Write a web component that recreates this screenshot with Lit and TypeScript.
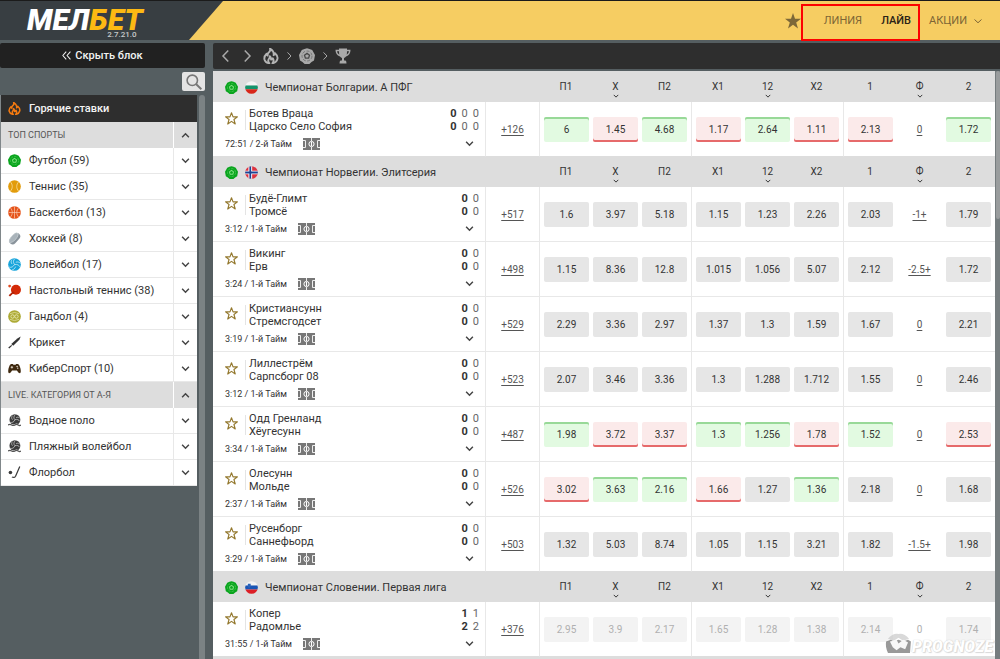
import { LitElement, html, css, svg, nothing } from "lit";
import { customElement, property } from "lit/decorators.js";
import { classMap } from "lit/directives/class-map.js";

type Odd = string;

interface Match {
  home: string;
  away: string;
  score: [string[], string[]];
  time: string;
  more: string;
  odds: Odd[];
  off?: boolean;
}

interface League {
  flag: string;
  title: string;
  matches: Match[];
}

const z2: [string[], string[]] = [["0", "0"], ["0", "0"]];

/* A trailing ^ marks a rising price, a trailing _ a falling one. */
const LEAGUES: League[] = [
  {
    flag: "bg",
    title: "Чемпионат Болгарии. А ПФГ",
    matches: [
      { home: "Ботев Враца", away: "Царско Село София", score: [["0", "0", "0"], ["0", "0", "0"]], time: "72:51 / 2-й Тайм", more: "+126",
        odds: ["6^", "1.45_", "4.68^", "1.17_", "2.64^", "1.11_", "2.13_", "0", "1.72^"] },
    ],
  },
  {
    flag: "no",
    title: "Чемпионат Норвегии. Элитсерия",
    matches: [
      { home: "Будё-Глимт", away: "Тромсё", score: z2, time: "3:12 / 1-й Тайм", more: "+517",
        odds: ["1.6", "3.97", "5.18", "1.15", "1.23", "2.26", "2.03", "-1+", "1.79"] },
      { home: "Викинг", away: "Ерв", score: z2, time: "3:24 / 1-й Тайм", more: "+498",
        odds: ["1.15", "8.36", "12.8", "1.015", "1.056", "5.07", "2.12", "-2.5+", "1.72"] },
      { home: "Кристиансунн", away: "Стремсгодсет", score: z2, time: "3:19 / 1-й Тайм", more: "+529",
        odds: ["2.29", "3.36", "2.97", "1.37", "1.3", "1.59", "1.67", "0", "2.21"] },
      { home: "Лиллестрём", away: "Сарпсборг 08", score: z2, time: "3:12 / 1-й Тайм", more: "+523",
        odds: ["2.07", "3.46", "3.36", "1.3", "1.288", "1.712", "1.55", "0", "2.46"] },
      { home: "Одд Гренланд", away: "Хёугесунн", score: z2, time: "3:34 / 1-й Тайм", more: "+487",
        odds: ["1.98^", "3.72_", "3.37_", "1.3^", "1.256^", "1.78_", "1.52^", "0", "2.53_"] },
      { home: "Олесунн", away: "Мольде", score: z2, time: "2:37 / 1-й Тайм", more: "+526",
        odds: ["3.02_", "3.63^", "2.16^", "1.66_", "1.27", "1.36^", "2.18", "0", "1.68"] },
      { home: "Русенборг", away: "Саннефьорд", score: z2, time: "3:29 / 1-й Тайм", more: "+503",
        odds: ["1.32", "5.03", "8.74", "1.05", "1.15", "3.21", "1.82", "-1.5+", "1.98"] },
    ],
  },
  {
    flag: "si",
    title: "Чемпионат Словении. Первая лига",
    matches: [
      { home: "Копер", away: "Радомлье", score: [["1", "1"], ["2", "2"]], time: "31:55 / 1-й Тайм", more: "+376", off: true,
        odds: ["2.95", "3.9", "2.17", "1.65", "1.28", "1.38", "2.14", "0", "1.74"] },
    ],
  },
];

const MARKETS = ["П1", "X", "П2", "X1", "12", "X2", "1", "Ф", "2"];

const SPORTS = [
  ["football", "Футбол (59)"],
  ["tennis", "Теннис (35)"],
  ["basket", "Баскетбол (13)"],
  ["hockey", "Хоккей (8)"],
  ["volley", "Волейбол (17)"],
  ["pingpong", "Настольный теннис (38)"],
  ["handball", "Гандбол (4)"],
  ["cricket", "Крикет"],
  ["esport", "КиберСпорт (10)"],
];

const LIVE = [
  ["beach", "Водное поло"],
  ["beach", "Пляжный волейбол"],
  ["floorball", "Флорбол"],
];

const ballPattern = (line: string) => svg`
  <path d="M8 5.4 10.500 7.200 9.600 10.200H6.400L5.500 7.200Z" fill="none" stroke=${line} stroke-width="1.300"/>
  <circle cx="8" cy="8" r="5" fill="none" stroke=${line} stroke-width=".5" stroke-dasharray="3 1.500"/>`;

const ICONS: Record<string, unknown> = {
  football: svg`<path d="M8 .2 10.500 1 13.200 2 14.600 4.600 16 7 15.500 9.800 15 12.600 12.500 14 10.400 16H5.600L3.500 14 1 12.600.5 9.800 0 7 1.400 4.600 2.800 2 5.500 1Z" fill="#0aa51e"/>${ballPattern("#7fe07f")}`,
  tennis: svg`<circle cx="8" cy="8" r="7.8" fill="#e29c0b"/><path d="M3 2.4C6 5.4 6 10.6 3 13.6M13 2.4C10 5.4 10 10.6 13 13.6" stroke="#f8dc9c" fill="none"/>`,
  basket: svg`<circle cx="8" cy="8" r="7.8" fill="#e5531a"/><path d="M8 .6V15.4M.6 8H15.4M3 2.4C6 5.4 6 10.6 3 13.6M13 2.4C10 5.4 10 10.6 13 13.6" stroke="#fbd3bd" stroke-width=".8" fill="none"/>`,
  hockey: svg`<g transform="rotate(-48 8 8)"><rect x="0" y="4" width="16" height="8.6" rx="4.3" fill="#89939b"/><ellipse cx="8" cy="6.6" rx="7.4" ry="3.1" fill="#a9b3ba" stroke="#dfe4e7" stroke-width=".6"/></g>`,
  volley: svg`<circle cx="8" cy="8" r="7.8" fill="#17a4db"/><path d="M8 8C6 5 6.400 2.600 8.600.8M8 8C11.500 7.500 13.800 8.800 14.800 11M8 8C6.500 11 4 12 1.500 11.200M5 7.500C3.500 5.500 3.600 3.500 5 2M9.500 5.200C12 4.500 14 5 15.200 6.600M9.400 10.600C8.500 13 6.800 14.400 5 14.700" stroke="#d5f0fa" stroke-width=".9" fill="none"/>`,
  pingpong: svg`<circle cx="9.800" cy="7" r="6.200" fill="#d42a07"/><path d="M6 8.500 8.500 11.500 6 12 2.500 15.400.8 13.700 4.500 10.500Z" fill="#b32206"/><circle cx="2" cy="2.600" r="1.700" fill="#e04a20"/>`,
  handball: svg`<circle cx="8" cy="8" r="7.800" fill="#adaa35"/><circle cx="5.600" cy="8" r="2.100" fill="none" stroke="#ecebb9"/><circle cx="10.400" cy="8" r="2.100" fill="none" stroke="#ecebb9"/><path d="M2.500 4.500Q8 1.500 13.500 4.500M2.500 11.500Q8 14.500 13.500 11.500" fill="none" stroke="#ecebb9" stroke-width=".8"/>`,
  cricket: svg`<path d="M.3 14.200 4.200 11.200 5 12 1.500 15.500Z" fill="#333"/><path d="M4 9.800 11.500 3 15.600.6 14 4.600 6.400 12.100Z" fill="#333"/>`,
  esport: svg`<path d="M3.600 2.500H6L6.600 3.500H9.400L10 2.500H12.400Q14 3 15.200 7.500 16.500 13 14.800 13.700 12.800 14 11 10.500H5Q3.200 14 1.200 13.700-.5 13 .8 7.500 2 3 3.600 2.500Z" fill="#402a10"/><path d="M4.800 5V8M3.300 6.500H6.300" stroke="#f3ece2" stroke-width="1"/><circle cx="11.200" cy="5.600" r=".9" fill="#f3ece2"/><circle cx="12" cy="7.600" r=".8" fill="#f3ece2"/>`,
  beach: svg`<circle cx="8.500" cy="7" r="6.700" fill="#3b3b3b"/><path d="M8.500 7C6.500 5 7 2.600 9 .8M8.500 7C11.500 6 13.500 7.400 14.600 9M8.500 7C7.500 10 5 11 2.600 10.200M5.500 7C4 5 4.400 3.600 5.400 2M10 4.400C12 3.600 13.600 4 14.600 5" stroke="#ddd" stroke-width=".8" fill="none"/><path d="M0 12.300Q2.500 10.800 4.500 12.300T8.500 12.300 12.500 12.300 16 12.300V14.800H0Z" fill="#fff"/><path d="M0 13.500Q2.500 12 4.500 13.500T8.500 13.500 12.500 13.500 16 13.500" stroke="#555" stroke-width="1.300" fill="none"/>`,
  floorball: svg`<circle cx="3" cy="8" r="2.200" fill="#3a3a3a"/><path d="M14.500.5 9.300 12.500Q8 15 4.800 13.600" stroke="#3a3a3a" stroke-width="1.500" fill="none"/>`,
  fire: svg`<path d="M7 .6Q11.600 3.600 10.600 7.200 11.800 6.600 12 5.200 15.200 8 14.400 11 13.400 14.600 9.400 15.300 11.600 12.800 9.800 10.200 9 11.600 8 11.600 8.300 9.600 6.800 8.200 6.800 10.200 5.600 11.400 4.600 13.200 6.400 15.300 2.200 14.600 1.400 11.200 1 8.200 3.600 5.800 3.800 7.200 4.600 7.600 4.400 5.200 6.400 3.800 7.600 2.600 7 .6Z" fill="none" stroke="currentColor" stroke-width="1.900" stroke-linejoin="round"/>`,
  ballGray: svg`<path d="M8 .2 10.500 1 13.200 2 14.600 4.600 16 7 15.500 9.800 15 12.600 12.500 14 10.400 16H5.600L3.500 14 1 12.600.5 9.800 0 7 1.400 4.600 2.800 2 5.500 1Z" fill="#a9a9a9"/>${ballPattern("#474747")}`,
  cup: svg`<path d="M4 .5H12V1.800H15.500Q15.600 7 11 8.400 10 9.700 9 10V12.500H10.500Q11.500 13 11.500 15.500H4.500Q4.500 13 5.500 12.500H7V10Q6 9.700 5 8.400.4 7 .5 1.800H4ZM2 3.200Q2.300 5.800 4.300 6.700 4 5.200 4 3.200ZM14 3.200H12Q12 5.200 11.700 6.700 13.700 5.800 14 3.200Z" fill="#a9a9a9" fill-rule="evenodd"/>`,
  starLine: svg`<path d="M8 1 9.900 6H15.300L11 9.200 12.600 14.800 8 11.500 3.400 14.800 5 9.200.7 6H6.100Z" fill="none" stroke="#94792f" stroke-width="1.400" stroke-linejoin="round"/>`,
  star: svg`<path d="M8 0 10 5.800H16L11.200 9.400 13 15.400 8 11.800 3 15.400 4.800 9.400 0 5.800H6Z" fill="#7d6838"/>`,
  down: svg`<path d="M2 5 8 11 14 5" fill="none" stroke="currentColor" stroke-width="2.600"/>`,
  thin: svg`<path d="M1 5 8 11.500 15 5" fill="none" stroke="currentColor" stroke-width="2"/>`,
  up: svg`<path d="M2 11 8 5 14 11" fill="none" stroke="currentColor" stroke-width="2.600"/>`,
  left: svg`<path d="M11 .8 4 8 11 15.200" fill="none" stroke="currentColor" stroke-width="2"/>`,
  right: svg`<path d="M5 .8 12 8 5 15.200" fill="none" stroke="currentColor" stroke-width="2"/>`,
  dbl: svg`<path d="M7.500 1 1.500 8 7.500 15M15 1 9 8 15 15" fill="none" stroke="currentColor" stroke-width="1.800"/>`,
  search: svg`<circle cx="6.300" cy="6.300" r="5.200" fill="none" stroke="#777" stroke-width="1.600"/><path d="M10 10 15.400 15.200" stroke="#777" stroke-width="2"/>`,
  bg: svg`<clipPath id="c"><circle cx="8" cy="8" r="7.800"/></clipPath><g clip-path="url(#c)"><path d="M0 0H16V5.500H0Z" fill="#f4f4f4"/><path d="M0 5.500H16V10H0Z" fill="#14936b"/><path d="M0 10H16V16H0Z" fill="#d8261a"/></g>`,
  no: svg`<clipPath id="c"><circle cx="8" cy="8" r="7.800"/></clipPath><g clip-path="url(#c)"><path d="M0 0H16V16H0Z" fill="#dc3340"/><path d="M6.500 0V16M0 8H16" stroke="#fff" stroke-width="4.600"/><path d="M6.500 0V16M0 8H16" stroke="#1d4293" stroke-width="2.200"/></g>`,
  si: svg`<clipPath id="c"><circle cx="8" cy="8" r="7.800"/></clipPath><g clip-path="url(#c)"><path d="M0 0H16V5.500H0Z" fill="#f4f4f4"/><path d="M0 5.500H16V10.500H0Z" fill="#1955b5"/><path d="M0 10.500H16V16H0Z" fill="#dc1f26"/><path d="M3.500 3.500H7V7Q6 8.500 5.200 8.600 4 8.400 3.500 7Z" fill="#2a62ba"/></g>`,
};

@customElement("mb-icon")
class MbIcon extends LitElement {
  @property() name = "";

  static styles = css`
    :host { display: inline-block; width: 13px; height: 13px; flex: none; }
    svg { display: block; width: 100%; height: 100%; }
  `;

  render() {
    return html`<svg viewBox="0 0 16 16" aria-hidden="true">${ICONS[this.name]}</svg>`;
  }
}

@customElement("mb-topbar")
class MbTopbar extends LitElement {
  static styles = css`
    :host { display: block; position: relative; border-top: 1px solid #1b1b1b; background: #f6cd62; }
    .bar { display: flex; height: 39px; }
    .brand { width: 223px; flex: none; box-sizing: border-box; padding-left: 27px; background: #383e42; clip-path: polygon(0 0, 100% 0, 189px 100%, 0 100%); }
    .logo { display: grid; width: max-content; text-decoration: none; }
    .word { font-size: 30px; line-height: 22px; padding-top: 8px; font-weight: 900; font-style: italic; color: #fff; }
    .word b { font-weight: 900; color: #fdb913; }
    .ver { font-size: 8px; line-height: 8px; font-weight: 500; color: #c7cacb; justify-self: end; padding-right: 6px; }
    nav { margin-left: auto; display: flex; align-items: center; padding-right: 18px; }
    .fav { width: 16px; height: 16px; margin-right: 23px; }
    a { font-size: 11px; line-height: 16px; font-weight: 400; color: #7d6535; text-decoration: none; }
    .line { margin-right: 19px; }
    .live { color: #2b2216; font-weight: 500; margin-right: 18px; }
    .drop { display: flex; align-items: center; gap: 7px; }
    .drop mb-icon { width: 8px; height: 8px; }
    .mark { position: absolute; right: 80px; top: 3px; width: 119px; height: 37px; box-sizing: border-box; border: 2px solid #fd0100; pointer-events: none; z-index: 2; }
  `;

  render() {
    return html`
      <div class="bar">
        <div class="brand">
          <a class="logo" href="#"><span class="word">МЕЛ<b>БЕТ</b></span><span class="ver">2.7.21.0</span></a>
        </div>
        <nav>
          <mb-icon class="fav" name="star"></mb-icon>
          <a class="line" href="#">ЛИНИЯ</a>
          <a class="live" href="#">ЛАЙВ</a>
          <a class="drop" href="#">АКЦИИ <mb-icon name="thin"></mb-icon></a>
        </nav>
      </div>
      <div class="mark"></div>`;
  }
}

@customElement("mb-sidebar")
class MbSidebar extends LitElement {
  static styles = css`
    :host { display: flex; flex-direction: column; min-height: 0; }
    button { font: inherit; border: 0; padding: 0; cursor: pointer; color: inherit; }
    .hide { display: flex; align-items: center; justify-content: center; gap: 4px; height: 25px; background: #212121; color: #f2f2f2; border-radius: 2px; font-size: 11px; font-weight: 500; flex: none; }
    .hide mb-icon { width: 9px; height: 9px; }
    .find { align-self: flex-end; width: 23px; height: 19px; margin: 4px 0; background: #e4e4e4; border-radius: 2px; display: grid; place-items: center; flex: none; }
    .find mb-icon { width: 16px; height: 16px; }
    .scroll { flex: 1; min-height: 0; display: flex; overflow: hidden; }
    .track { width: 6px; margin-left: 2px; background: #7b8284; border-radius: 3px 3px 0 0; flex: none; }
    .list { flex: 1; min-width: 0; align-self: flex-start; border-left: 1px solid #80878a; font-size: 11px; }
    .hot { display: flex; align-items: center; gap: 8px; height: 27px; padding-left: 7px; background: #2e2e2e; color: #f4f4f4; font-weight: 500; text-decoration: none; }
    .hot mb-icon { color: #f47a10; }
    .row { display: flex; height: 26px; box-sizing: border-box; background: #fff; color: #333; border-bottom: 1px solid #e8e8e8; }
    .row a { flex: 1; display: flex; align-items: center; gap: 8px; padding-left: 7px; color: inherit; text-decoration: none; }
    .row button { width: 24px; box-sizing: border-box; border-left: 1px solid #e8e8e8; background: none; display: grid; place-items: center; }
    .row button mb-icon { width: 9px; height: 9px; color: #444; }
    .head { background: #ddd; font-size: 9px; color: #555; border-bottom: 0; }
    .head span { flex: 1; padding-left: 7px; align-self: center; }
    .head button { border-left-color: #fff; }
  `;

  head(label: string) {
    return html`<div class="row head"><span>${label}</span><button aria-label="Свернуть"><mb-icon name="up"></mb-icon></button></div>`;
  }

  rows(list: string[][]) {
    return list.map(([icon, label]) => html`
      <div class="row">
        <a href="#"><mb-icon name=${icon}></mb-icon>${label}</a>
        <button aria-label="Развернуть"><mb-icon name="down"></mb-icon></button>
      </div>`);
  }

  render() {
    return html`
      <button class="hide"><mb-icon name="dbl"></mb-icon>Скрыть блок</button>
      <button class="find" aria-label="Поиск"><mb-icon name="search"></mb-icon></button>
      <div class="scroll">
        <div class="list">
          <a class="hot" href="#"><mb-icon name="fire"></mb-icon>Горячие ставки</a>
          ${this.head("ТОП СПОРТЫ")}
          ${this.rows(SPORTS)}
          ${this.head("LIVE. КАТЕГОРИЯ ОТ А-Я")}
          ${this.rows(LIVE)}
        </div>
        <div class="track"></div>
      </div>`;
  }
}

@customElement("mb-league")
class MbLeague extends LitElement {
  @property({ attribute: false }) league!: League;

  static styles = css`
    :host { display: block; }
    table { width: 100%; table-layout: fixed; border-spacing: 0; border-collapse: separate; }
    th, td { padding: 0 2px; box-sizing: border-box; }
    .c-more { width: 54px; }
    .c-a { width: 52px; }
    .c-b { width: 49px; }
    .c-c { width: 51px; }
    th { height: 30px; background: #ddd; font-size: 10px; font-weight: 400; color: #333; vertical-align: top; }
    td { height: 55px; background: #fff; border-bottom: 1px solid #e8e8e8; }
    tr:last-child td { border-bottom-color: #ddd; }
    th.a { padding-left: 4px; }
    td.a { padding-left: 4px; border-left: 1px solid #e8e8e8; }
    .c { padding-right: 4px; }
    th.title { vertical-align: middle; padding: 0; }
    .name { display: flex; align-items: center; padding-left: 12px; font-size: 11px; font-weight: 400; color: #333; }
    .name mb-icon { margin-right: 7px; }
    .label { display: block; padding-top: 9px; line-height: 12px; }
    .caret { display: block; width: 6px; height: 6px; margin: 0 auto; }
    .info { padding: 3px 6px 0 12px; color: #333; }
    .top { display: flex; align-items: center; font-size: 11px; line-height: 13px; }
    .fav, .open { border: 0; background: none; padding: 0; display: block; cursor: pointer; color: #444; }
    .teams { flex: 1; min-width: 0; margin-left: 7px; padding-left: 4px; background: linear-gradient(#e4e4e4, #e4e4e4) left center / 1px 20px no-repeat; }
    .teams div, .score div { height: 13px; white-space: nowrap; }
    .score div { display: flex; gap: 5px; color: #666; }
    .score b { color: #333; }
    .bottom { display: flex; align-items: center; gap: 11px; height: 22px; font-size: 9px; }
    .pitch { width: 17px; height: 12px; }
    .open { margin-left: auto; margin-right: 5px; }
    .open mb-icon { display: block; width: 9px; height: 9px; }
    .more { text-align: center; border-left: 1px solid #e8e8e8; font-size: 10px; }
    .more a, .fora { color: #555; text-decoration: underline; text-underline-offset: 2px; }
    .odd { display: block; width: 100%; height: 25px; border: 0; border-radius: 2px; padding: 0; font: 400 10px/25px Roboto, sans-serif; color: #333; background: #e6e6e6; cursor: pointer; }
    .up { background: #e2fae1; box-shadow: inset 0 2px #98d998; }
    .down { background: #fbeaea; box-shadow: inset 0 -2px #e66a6b; }
    .fora { background: none; color: #555; }
    .off { background: #f3f3f3; color: #b0b0b0; }
    .fora.off { background: none; text-decoration: none; }
  `;

  odd(value: string, i: number, off: boolean) {
    const up = value.endsWith("^");
    const down = value.endsWith("_");
    return html`<td class=${"abc"[i % 3]}>
      <button class=${classMap({ odd: true, up, down, fora: i === 7, off })} ?disabled=${off}>${value.replace(/[\^_]$/, "")}</button>
    </td>`;
  }

  render() {
    const { flag, title, matches } = this.league;
    return html`
      <table>
        <colgroup>
          <col /><col class="c-more" />
          ${MARKETS.map((_, i) => html`<col class=${"c-" + "abc"[i % 3]} />`)}
        </colgroup>
        <thead>
          <tr>
            <th class="title" colspan="2" scope="colgroup">
              <div class="name"><mb-icon name="football"></mb-icon><mb-icon name=${flag}></mb-icon>${title}</div>
            </th>
            ${MARKETS.map((m, i) => html`<th class=${"abc"[i % 3]} scope="col"><span class="label">${m}</span>${[1, 4, 7].includes(i) ? html`<mb-icon class="caret" name="down"></mb-icon>` : nothing}</th>`)}
          </tr>
        </thead>
        <tbody>
          ${matches.map((m) => html`
            <tr>
              <td class="info">
                <div class="top">
                  <button class="fav" aria-label="В избранное"><mb-icon name="starLine"></mb-icon></button>
                  <div class="teams"><div>${m.home}</div><div>${m.away}</div></div>
                  <div class="score">${m.score.map((s) => html`<div>${s.map((n, i) => i ? html`<span>${n}</span>` : html`<b>${n}</b>`)}</div>`)}</div>
                </div>
                <div class="bottom">
                  <span>${m.time}</span>
                  <svg class="pitch" viewBox="0 0 17 12" aria-hidden="true">
                    <path d="M0 0H17V12H0Z" fill="#777"/>
                    <path d="M8.500 0V3M8.500 9V12M0 2.500H2.500V9.500H0M17 2.500H14.500V9.500H17" stroke="#eee" fill="none"/>
                    <circle cx="8.500" cy="6" r="2.600" fill="none" stroke="#fff"/><path d="M8.500 4V8" stroke="#fff"/>
                  </svg>
                  <button class="open" aria-label="Развернуть"><mb-icon name="down"></mb-icon></button>
                </div>
              </td>
              <td class="more"><a href="#">${m.more}</a></td>
              ${m.odds.map((o, i) => this.odd(o, i, !!m.off))}
            </tr>`)}
        </tbody>
      </table>`;
  }
}

@customElement("app-root")
class AppRoot extends LitElement {
  static styles = css`
    :host { display: flex; flex-direction: column; height: 100vh; overflow: hidden; position: relative; background: #555e61; font-family: Roboto, "Liberation Sans", sans-serif; }
    .body { flex: 1; min-height: 0; display: grid; grid-template-columns: 205px minmax(0, 1fr); column-gap: 8px; padding-top: 3px; }
    main { display: flex; flex-direction: column; min-width: 0; min-height: 0; }
    .crumbs { display: flex; align-items: center; height: 26px; background: #2e2e2e; border-radius: 2px 0 0 2px; padding-left: 7px; color: #a9a9a9; flex: none; }
    .crumbs button { border: 0; background: none; color: #a9a9a9; padding: 0; cursor: pointer; display: block; width: 21px; text-align: left; }
    .crumbs mb-icon { width: 16px; height: 16px; display: block; }
    .crumbs .arrow { width: 12px; height: 12px; }
    .crumbs .sep { width: 8px; height: 8px; margin: 0 6px; }
    .crumbs .fire { margin-left: 1px; color: #b4b4b4; }
    .view { flex: 1; min-height: 0; display: flex; margin-top: 2px; overflow: hidden; }
    .leagues { flex: 1; min-width: 0; background: #ddd; border-top: 1px solid #ddd; }
    .track { width: 5px; background: #757c7e; flex: none; }
    .thumb { height: 148px; margin-left: 1px; border-radius: 3px; background: #999c9d; }
    .water { position: absolute; right: 7px; bottom: 5px; display: flex; align-items: flex-end; font: italic 900 16px/14px Roboto, sans-serif; color: #fff; text-shadow: 0 0 1px #aaa, 1px 1px 1px #ccc; opacity: .7; pointer-events: none; }
    .water svg { width: 27px; height: 21px; display: block; }
  `;

  render() {
    return html`
      <mb-topbar></mb-topbar>
      <div class="body">
        <mb-sidebar></mb-sidebar>
        <main>
          <div class="crumbs">
            <button aria-label="Назад"><mb-icon class="arrow" name="left"></mb-icon></button>
            <button aria-label="Вперёд"><mb-icon class="arrow" name="right"></mb-icon></button>
            <mb-icon class="fire" name="fire"></mb-icon>
            <mb-icon class="sep" name="right"></mb-icon>
            <mb-icon name="ballGray"></mb-icon>
            <mb-icon class="sep" name="right"></mb-icon>
            <mb-icon name="cup"></mb-icon>
          </div>
          <div class="view">
            <div class="leagues">${LEAGUES.map((l) => html`<mb-league .league=${l}></mb-league>`)}</div>
            <div class="track"><div class="thumb"></div></div>
          </div>
        </main>
      </div>
      <div class="water">
        <svg viewBox="0 0 28 22" aria-hidden="true">
          <path d="M3 6Q8 0 14 1 20 0 25 6L19 8 14 5 9 8Z" fill="#c9c9c9"/>
          <path d="M1 9 6 7 9 9 14 7 19 9 24 7 27 9 26 21H3Q0 15 1 9Z" fill="#6e6e6e"/>
          <path d="M5 9 12 7 14 11 19 7 24 10 21 17 16 15 12 18 8 15Z" fill="#f4f4f4"/>
        </svg>
        <span>PROGNOZE</span>
      </div>`;
  }
}
